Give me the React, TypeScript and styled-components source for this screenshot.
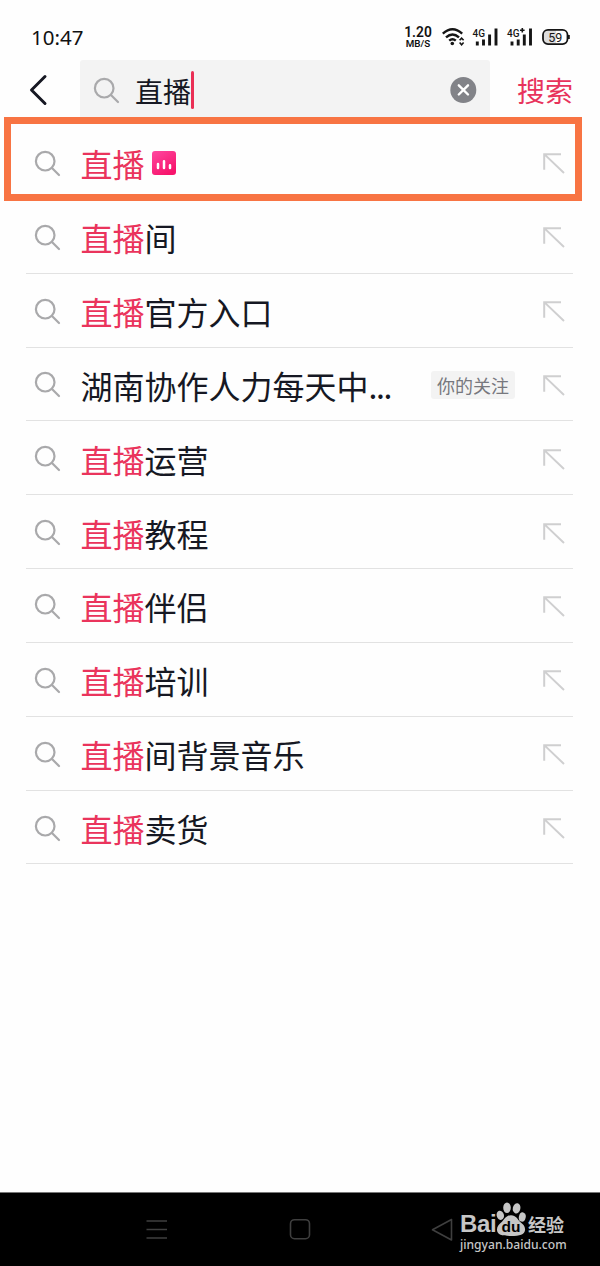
import React from "react";
import styled, { createGlobalStyle } from "styled-components";

const Global = createGlobalStyle`
  * { box-sizing: border-box; }
  body { margin: 0; background: #fefefe; font-family: "Noto Sans CJK SC", sans-serif; }
  svg { display: block; flex: none; }
`;

const Screen = styled.div`
  width: 600px;
  height: 1266px;
  display: flex;
  flex-direction: column;
  overflow: hidden;
`;

const StatusBar = styled.header`
  height: 60px;
  flex: none;
  padding: 14px 30px 0 31px;
  display: flex;
  align-items: center;
  color: #111;
`;

const Clock = styled.span`
  flex: 1;
  font: 400 20.5px/24px "Noto Sans", sans-serif;
`;

const Speed = styled.div`
  width: 28px;
  margin-right: 10px;
  text-align: center;
  font-family: Roboto, sans-serif;
  white-space: nowrap;
`;

const SpeedValue = styled.div`
  font-size: 13.8px;
  font-weight: 600;
  line-height: 13px;
`;

const SpeedUnit = styled.div`
  font-size: 9.8px;
  font-weight: 600;
  line-height: 10px;
`;

const SearchHeader = styled.div`
  height: 66px;
  flex: none;
  display: flex;
  padding-right: 27px;
`;

const BackButton = styled.div`
  width: 80px;
  height: 60px;
  display: flex;
  align-items: center;
  padding-left: 29px;
`;

const SearchBox = styled.div`
  width: 410px;
  height: 61px;
  display: flex;
  align-items: center;
  padding: 0 13px;
  border-radius: 3px 3px 0 0;
  background: #f3f3f3;
`;

const Query = styled.span`
  margin-left: 15px;
  font-size: 28px;
  line-height: 40px;
  color: #161823;
`;

const Caret = styled.span`
  width: 3px;
  height: 38px;
  margin: -1px 0 0 0;
  border-radius: 1.5px;
  background: #ea2f55;
`;

const Spacer = styled.span`
  flex: 1;
`;

const SearchButton = styled.div`
  margin-left: auto;
  height: 61px;
  line-height: 61px;
  font-size: 28px;
  color: #e8335c;
`;

const Results = styled.main`
  flex: 1;
  position: relative;
  padding: 0 27px 0 26px;
`;

const Highlight = styled.div`
  position: absolute;
  left: 4px;
  top: -9px;
  width: 578px;
  height: 84px;
  border: 7px solid #f87443;
`;

const Row = styled.div`
  height: 73.85px;
  display: flex;
  align-items: center;
  padding: 2px 8px 0 8px;
  border-bottom: 1px solid #e2e2e2;
`;

const Title = styled.div`
  flex: 1;
  display: flex;
  align-items: center;
  margin-left: 19.4px;
  font-size: 32px;
  line-height: 44px;
  height: 46px;
  color: #161823;
  white-space: nowrap;
`;

const Keyword = styled.span`
  color: #ea345c;
`;

const Ellipsis = styled.span`
  letter-spacing: -1.3px;
`;

const LiveBadge = styled.span`
  margin: -1px 0 0 8px;
`;

const Tag = styled.span`
  width: 84px;
  height: 28px;
  margin-right: 28px;
  border-radius: 3px;
  background: #f3f3f3;
  color: #77787e;
  font-size: 18px;
  line-height: 28px;
  text-align: center;
  white-space: nowrap;
`;

const NavBar = styled.footer`
  height: 74px;
  flex: none;
  display: flex;
  align-items: center;
  padding: 0 0 2px 146px;
  background: #000;
  border-top: 1px solid #777;
`;

const Watermark = styled.div`
  width: 110px;
  margin: -3px 0 0 6px;
  color: #c6c6c6;
`;

const Brand = styled.div`
  display: flex;
  align-items: flex-end;
  height: 34px;
`;

const BrandWord = styled.span`
  width: 36px;
  font: 700 24px/24px "Liberation Sans", sans-serif;
  letter-spacing: -0.3px;
`;

const BrandName = styled.span`
  margin-left: 2px;
  font-size: 18px;
  line-height: 24px;
  font-weight: 700;
`;

const Site = styled.div`
  font: 500 12.1px/17px "Noto Sans", sans-serif;
  white-space: nowrap;
`;

const SearchIcon = () => (
  <svg width="27" height="27" viewBox="0 0 27 27" fill="none" stroke="#a9a9ab" strokeWidth="2.2" strokeLinecap="round">
    <circle cx="11.2" cy="11.2" r="9.3" />
    <path d="M18 18 25 25" />
  </svg>
);

const FillArrow = () => (
  <svg width="22" height="22" viewBox="0 0 22 22" fill="none" stroke="#cfcfd0" strokeWidth="2">
    <path d="M1.2 17.8V2.2H18M1.5 2.4 21 21" />
  </svg>
);

const BadgeIcon = () => (
  <svg width="24" height="24" viewBox="0 0 24 24">
    <defs>
      <linearGradient id="live" x1="0" y1="0" x2="0.6" y2="1">
        <stop offset="0" stopColor="#ff48a0" />
        <stop offset="1" stopColor="#f7146c" />
      </linearGradient>
    </defs>
    <rect width="24" height="24" rx="3" fill="url(#live)" />
    <path d="M6 13v4M12 10.3V17M18 14.3V17" stroke="#fff" strokeWidth="2.5" strokeLinecap="round" />
  </svg>
);

const StatusIcons = () => (
  <svg width="128" height="24" viewBox="442 24.5 128 24" fill="none" stroke="#151515">
    <g strokeWidth="2.4">
      <path d="M442.8 33.2Q452.5 24.5 462.2 33.2M446 36.9Q452.5 31.1 459 36.9M449.2 40.2Q452.5 37.3 455.8 40.2" />
    </g>
    <circle cx="452.3" cy="43" r="1.8" fill="#151515" stroke="none" />
    <path d="m459.6 39.8 2-2.2 2 2.2M459.6 42l2 2.2 2-2.2" strokeWidth="1.6" />
    <g strokeWidth="2.9">
      <path d="M477.3 41V45M483.5 39V45M489.6 34V45M496 28V45" />
      <path d="M512 41V45M518.2 39V45M524.3 34V45M530.5 28V45" />
    </g>
    <g fill="#151515" stroke="none" fontFamily="Roboto, sans-serif" fontWeight="500" fontSize="11">
      <text x="472.6" y="36.8" textLength="12.5" lengthAdjust="spacingAndGlyphs">4G</text>
      <text x="507" y="36.8" textLength="12.5" lengthAdjust="spacingAndGlyphs">4G</text>
    </g>
    <path d="M520 29.8h4.6M522.3 27.5v4.6" strokeWidth="1.6" />
    <path d="M548 29.5h8v14h-8a5 5 0 0 1-5-5v-4a5 5 0 0 1 5-5z" fill="#ddd" stroke="none" />
    <rect x="543" y="29.3" width="24.5" height="14.3" rx="5" strokeWidth="1.8" />
    <path d="M568.8 34.5v4" strokeWidth="2" />
    <text x="555.3" y="41" fill="#151515" stroke="none" textAnchor="middle" fontFamily="Roboto, sans-serif" fontSize="12.5">59</text>
  </svg>
);

const Paw = () => (
  <svg width="30" height="34" viewBox="0 0 30 34" fill="#c6c6c6">
    <ellipse cx="4.3" cy="13.3" rx="3.6" ry="4.7" transform="rotate(-15 4.3 13.3)" />
    <ellipse cx="11" cy="5.8" rx="3.8" ry="5.2" />
    <ellipse cx="20.6" cy="6.3" rx="3.8" ry="5.2" transform="rotate(12 20.6 6.3)" />
    <ellipse cx="26.3" cy="15" rx="3.4" ry="4.7" transform="rotate(12 26.3 15)" />
    <path d="M15 13.3c5 0 6.5 4 9 6.5 3 2.5 5.500 4.500 5 8.500-.6 4.500-5 5.700-14 5.700S1.500 33 1 28.300c-.4-3.800 2-5.800 5-8.500 2.500-2.500 4-6.500 9-6.500z" />
    <text x="15" y="30" fill="#000" textAnchor="middle" fontFamily="Liberation Sans, sans-serif" fontWeight="700" fontSize="15.5">du</text>
  </svg>
);

interface Suggestion {
  keyword?: string;
  rest: string;
  truncated?: boolean;
  live?: boolean;
  tag?: string;
}

const suggestions: Suggestion[] = [
  { keyword: "直播", rest: "", live: true },
  { keyword: "直播", rest: "间" },
  { keyword: "直播", rest: "官方入口" },
  { rest: "湖南协作人力每天中", truncated: true, tag: "你的关注" },
  { keyword: "直播", rest: "运营" },
  { keyword: "直播", rest: "教程" },
  { keyword: "直播", rest: "伴侣" },
  { keyword: "直播", rest: "培训" },
  { keyword: "直播", rest: "间背景音乐" },
  { keyword: "直播", rest: "卖货" },
];

export default function App() {
  return (
    <Screen>
      <Global />
      <StatusBar>
        <Clock>10:47</Clock>
        <Speed>
          <SpeedValue>1.20</SpeedValue>
          <SpeedUnit>MB/S</SpeedUnit>
        </Speed>
        <StatusIcons />
      </StatusBar>
      <SearchHeader>
        <BackButton>
          <svg width="20" height="32" viewBox="0 0 20 32" fill="none" stroke="#161823" strokeWidth="3" strokeLinecap="round" strokeLinejoin="round">
            <path d="M16 2.5 2.5 16 16 29.5" />
          </svg>
        </BackButton>
        <SearchBox>
          <SearchIcon />
          <Query>直播</Query>
          <Caret />
          <Spacer />
          <svg width="27" height="27" viewBox="0 0 27 27">
            <circle cx="13.3" cy="13" r="13" fill="#828388" />
            <path d="m8.8 8.3 9.2 9.2M18 8.3l-9.2 9.2" stroke="#fff" strokeWidth="2.4" strokeLinecap="round" />
          </svg>
        </SearchBox>
        <SearchButton>搜索</SearchButton>
      </SearchHeader>
      <Results>
        {suggestions.map((item, i) => (
          <Row key={i}>
            <SearchIcon />
            <Title>
              {item.keyword && <Keyword>{item.keyword}</Keyword>}
              <span>
                {item.rest}
                {item.truncated && <Ellipsis>...</Ellipsis>}
              </span>
              {item.live && <LiveBadge><BadgeIcon /></LiveBadge>}
            </Title>
            {item.tag && <Tag>{item.tag}</Tag>}
            <FillArrow />
          </Row>
        ))}
        <Highlight />
      </Results>
      <NavBar>
        <svg width="308" height="28" viewBox="146 1215 308 28" fill="none" stroke="#3f3f3f" strokeWidth="1.6">
          <path d="M146.5 1221h20.5M146.5 1229.5h20.5M146.5 1238h20.5" />
          <rect x="290.5" y="1219.7" width="19" height="19" rx="4" />
          <path d="M451.5 1219.5v20.5L432.5 1229.8z" strokeLinejoin="round" />
        </svg>
        <Watermark>
          <Brand>
            <BrandWord>Bai</BrandWord>
            <Paw />
            <BrandName>经验</BrandName>
          </Brand>
          <Site>jingyan.baidu.com</Site>
        </Watermark>
      </NavBar>
    </Screen>
  );
}
